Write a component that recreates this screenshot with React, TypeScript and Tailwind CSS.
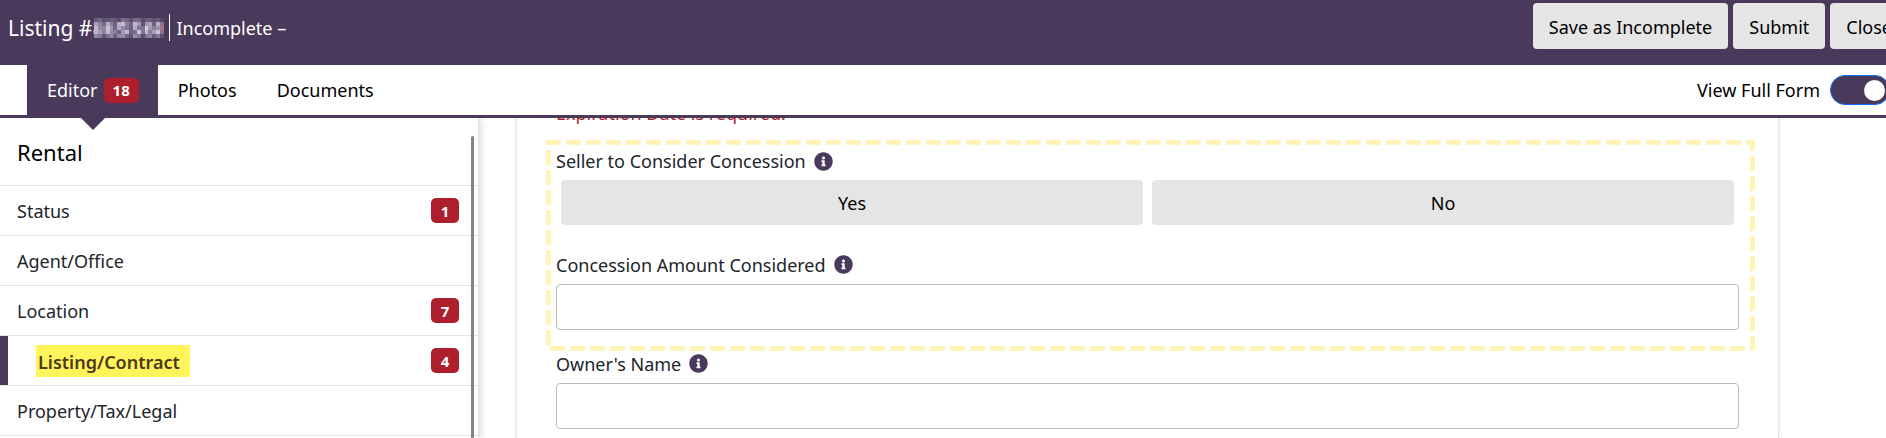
import React from 'react'
import { FaInfoCircle } from 'react-icons/fa'

type Section = {
  name: string
  errors?: number
  active?: boolean
}

const sections: Section[] = [
  { name: 'Status', errors: 1 },
  { name: 'Agent/Office' },
  { name: 'Location', errors: 7 },
  { name: 'Listing/Contract', errors: 4, active: true },
  { name: 'Property/Tax/Legal' },
]

// colours of the masked listing number, one row per line of blocks
const mask = [
  '#6a5d7b #75698a #5f5274 #62557a #6d6180 #64577a #5c4d6d #7d718c #75698a #5f5274 #766a89 #75687f #5c4d6d #6b5f7e #6c5d7c #5f5274 #675a78 #55466a',
  '#a79fb4 #8b8199 #75698a #b4adbf #8a7f97 #6c6080 #b5afc0 #c0bac9 #8a7f97 #716587 #c0bac9 #9e95ab #5f5274 #9e95ab #aaa2b6 #6c6080 #b5afc0 #8c7385',
  '#c7b8bd #9a86a0 #8f86a0 #c7c1cf #a399ac #75698a #b2abbd #9088a5 #8574a0 #6f6382 #b2abbd #8574a0 #7f7492 #d2cdd8 #a399ac #8c8299 #9a91ab #a87885',
  '#b9b2c3 #a59db3 #8d83a0 #beb8c9 #9088b5 #8a809b #6f6382 #a59db3 #beb7c6 #6f6382 #7b708d #c9c3d0 #8074a0 #beb8c9 #8a809b #a89ec0 #c7c1cf #966f83',
  '#8f85a0 #857a94 #63567a #81768f #978ca4 #6b5e7d #8f85a0 #978ca4 #736786 #63567a #978ca4 #857a94 #5c4d6d #82778f #8f85a0 #6b5e7d #857a94 #5c4d6d',
].map((row) => row.split(' '))

function Badge({ count }: { count: number }) {
  return (
    <span className="inline-flex h-[25px] min-w-7 items-center justify-center rounded-[5px] bg-[#ad1f2d] px-[9px] text-[15px] font-bold text-white">
      {count}
    </span>
  )
}

function InfoButton({ label }: { label: string }) {
  return (
    <button type="button" aria-label={`About ${label}`} className="text-[#49395b]">
      <FaInfoCircle className="size-[19px]" />
    </button>
  )
}

function TextField({ id, label }: { id: string; label: string }) {
  return (
    <div>
      <div className="mb-px flex h-[37px] items-center gap-2">
        <label htmlFor={id}>{label}</label>
        <InfoButton label={label} />
      </div>
      <input id={id} type="text" className="block h-[46px] w-full rounded border border-[#b9b9b9] bg-white px-3 outline-none" />
    </div>
  )
}

export default function App() {
  return (
    <div className="flex h-screen flex-col overflow-hidden bg-white font-['Noto_Sans',sans-serif] text-[18px] leading-7 text-[#212529]">
      <header className="flex h-[65px] shrink-0 items-start justify-between bg-[#49395b] text-white">
        <div className="flex items-center pt-[14px] pl-2 whitespace-nowrap">
          <h1 className="text-[21px] leading-[26px]">Listing #8</h1>
          <svg viewBox="0 0 18 5" preserveAspectRatio="none" className="-ml-[10px] h-5 w-[70px] bg-[#49395b]" shapeRendering="crispEdges" aria-hidden="true">
            {mask.map((row, y) =>
              row.map((fill, x) => <rect key={`${x}-${y}`} x={x} y={y} width="1" height="1" fill={fill} />)
            )}
          </svg>
          <span className="ml-[5px] border-l border-white pt-px pl-[6px] leading-[26px]">Incomplete –</span>
        </div>
        <div className="-mr-[22px] flex gap-[5px] pt-[3px] whitespace-nowrap text-black">
          <button type="button" className="h-[46px] rounded bg-[#e5e5e5] px-4 pt-[2px]">Save as Incomplete</button>
          <button type="button" className="h-[46px] rounded bg-[#e5e5e5] px-4 pt-[2px]">Submit</button>
          <button type="button" className="h-[46px] rounded bg-[#e5e5e5] px-4 pt-[2px]">Close</button>
        </div>
      </header>

      <nav className="z-10 flex h-[53px] shrink-0 justify-between border-b-[3px] border-[#49395b] bg-white text-black">
        <div className="flex pl-[27px]">
          <a href="#editor" className="relative flex items-center gap-[6px] bg-[#49395b] px-5 pr-[19px] text-white">
            Editor
            <Badge count={18} />
            <span className="absolute top-full left-[54px] mt-[3px] border-x-12 border-t-12 border-x-transparent border-t-[#49395b]" />
          </a>
          <a href="#photos" className="flex items-center px-5">Photos</a>
          <a href="#documents" className="flex items-center px-5">Documents</a>
        </div>
        <label className="-mr-1 flex items-center gap-[10px] whitespace-nowrap">
          View Full Form
          <input type="checkbox" role="switch" defaultChecked className="sr-only" />
          <span className="flex h-[30px] w-[60px] items-center justify-end rounded-full border border-[#0d6efd] bg-[#49395b] pr-1">
            <span className="size-[21px] rounded-full bg-white" />
          </span>
        </label>
      </nav>

      <div className="flex min-h-0 flex-1">
        <aside className="relative w-[479px] shrink-0 overflow-hidden border-r border-[#e0e0e0] shadow-[2px_0_8px_rgba(0,0,0,0.15)]">
          <h2 className="flex h-[68px] items-center border-b border-[#e3e3e3] pl-[17px] text-[22px] text-black">Rental</h2>
          <ul>
            {sections.map((section) => (
              <li key={section.name} className="border-b border-[#e3e3e3]">
                <a
                  href="#section"
                  className={
                    section.active
                      ? 'flex h-[49px] items-center justify-between border-l-8 border-[#49395b] pr-[19px] pl-7 font-semibold text-[#4a3a1e]'
                      : 'flex h-[49px] items-center justify-between pr-[19px] pl-[17px]'
                  }
                >
                  <span className={section.active ? 'bg-[#fff459] pt-[3px] pr-[10px] pb-px pl-[2px]' : ''}>{section.name}</span>
                  {section.errors && <Badge count={section.errors} />}
                </a>
              </li>
            ))}
          </ul>
          <div className="absolute top-[18px] right-1 bottom-0 w-[3px] rounded-t bg-[#858585]" />
        </aside>

        <main className="min-w-0 flex-1 overflow-hidden pr-[107px] pl-[37px]">
          <form className="flow-root h-full border-x border-[#e3e3e3] px-[39px] shadow-[0_0_4px_rgba(0,0,0,0.12)]">
            <p className="-mt-[19px] h-7 text-[#ad1f2d]">Expiration Date is required.</p>
            <div className="relative mt-[19px]">
              <div className="mb-1 flex h-[30px] items-center gap-2">
                <span id="concession">Seller to Consider Concession</span>
                <InfoButton label="Seller to Consider Concession" />
              </div>
              <div role="group" aria-labelledby="concession" className="flex gap-[9px] px-[5px]">
                <button type="button" className="h-[45px] flex-1 rounded bg-[#e5e5e5] text-black">Yes</button>
                <button type="button" className="h-[45px] flex-1 rounded bg-[#e5e5e5] text-black">No</button>
              </div>
              <div className="pt-[21px]">
                <TextField id="amount" label="Concession Amount Considered" />
              </div>
              <svg className="pointer-events-none absolute -top-[6px] -left-[10px] h-[211px] w-[calc(100%+26px)]" fill="none" aria-hidden="true">
                <rect x="2.5" y="2.5" className="h-[calc(100%-5px)] w-[calc(100%-5px)]" stroke="#fff3b8" strokeWidth="5" strokeDasharray="15 5" strokeDashoffset="2.5" />
              </svg>
            </div>
            <div className="pt-[15px]">
              <TextField id="owner" label="Owner's Name" />
            </div>
          </form>
        </main>
      </div>
    </div>
  )
}
